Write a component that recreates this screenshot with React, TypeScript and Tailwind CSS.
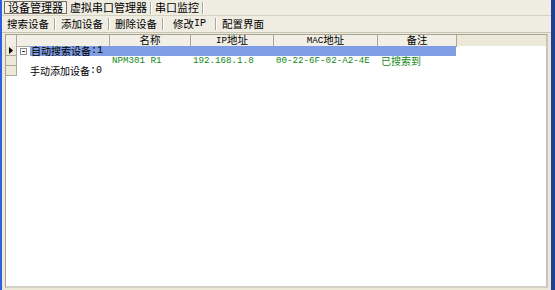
import React from "react";

const cn = "font-['Noto_Sans_CJK_SC','Liberation_Sans',sans-serif]";
const mono = "font-['Liberation_Mono','Noto_Sans_CJK_SC',monospace] text-[9.2px] leading-none";

const tabs = ["设备管理器", "虚拟串口管理器", "串口监控"];
const tools = ["搜索设备", "添加设备", "删除设备", "修改IP", "配置界面"];

// 列の幅（行ヘッダ / ツリー / 名称 / IP / MAC / 备注）
const cols = "grid-cols-[11px_93px_81px_83px_104px_79px]";

function Sep() {
  return <div className="w-[2px] h-[12px] border-l border-[#aca899] border-r border-r-white" />;
}

function Latin({ children }: { children: React.ReactNode }) {
  return <span className={mono}>{children}</span>;
}

export default function App() {
  return (
    <div className={`w-[555px] h-[290px] bg-[#ece9d8] flex text-[10.5px] text-black leading-none ${cn}`}>
      <div className="w-[2px] bg-[#2d5fe0]" />
      <div className="flex-1 flex flex-col">
        {/* タブ */}
        <div className="h-[16px] flex items-center pl-[2px] bg-[#efece1] border-b border-[#d6d2c2] text-[11px]">
          {tabs.map((t, i) => (
            <div key={t} className="flex items-center">
              <div
                className={
                  i === 0
                    ? "h-[13px] px-[3px] flex items-center border border-[#716f64] bg-[#f4f2ea]"
                    : "h-[13px] px-[3px] flex items-center"
                }
              >
                {t}
              </div>
              {i > 0 && <Sep />}
            </div>
          ))}
        </div>

        {/* ツールバー */}
        <div className="h-[17px] flex items-center bg-[#efece1] border-b border-[#c9c5b5]">
          {tools.map((t, i) => (
            <React.Fragment key={t}>
              <div className={t.endsWith("IP") ? "px-[9px] flex items-center" : "px-[5px] flex items-center"}>
                {t.endsWith("IP") ? (
                  <>
                    {t.slice(0, 2)}
                    <span className="font-['Liberation_Mono',monospace] text-[10px] leading-none">IP</span>
                  </>
                ) : (
                  t
                )}
              </div>
              {i < tools.length - 1 && <Sep />}
            </React.Fragment>
          ))}
        </div>

        {/* 一覧 */}
        <div className="flex-1 flex mt-[1px] pl-[3px] pb-[2px]">
          <div className="w-[543px] flex flex-col bg-white border border-[#a7a495] border-b-[2px] border-b-[#d4d0c8] border-r-[2px] border-r-[#c9c5b8]">
            <div className={`grid ${cols} h-[11px] bg-[#ece9d8]`}>
              {["", "", "名称", "IP地址", "MAC地址", "备注"].map((h, i) => (
                <div
                  key={i}
                  className="flex items-center justify-center border-r border-b border-[#aca899] bg-[#f1efe6]"
                >
                  {h === "IP地址" ? (
                    <>
                      <Latin>IP</Latin>地址
                    </>
                  ) : h === "MAC地址" ? (
                    <>
                      <Latin>MAC</Latin>地址
                    </>
                  ) : (
                    h
                  )}
                </div>
              ))}
            </div>

            {/* 行1：自動検索 */}
            <div className={`grid ${cols} h-[10px]`}>
              <div className="flex items-center justify-center border-r border-b border-[#aca899] bg-[#ece9d8]">
                <svg width="5" height="7" viewBox="0 0 5 7">
                  <path d="M0 0 L4 3.5 L0 7 Z" fill="#000" />
                </svg>
              </div>
              <div className="col-span-5 flex items-center">
                <div className="w-[13px] flex items-center justify-center">
                  <div className="w-[7px] h-[7px] border border-[#8c8c8c] flex items-center justify-center">
                    <div className="w-[3px] h-px bg-[#333]" />
                  </div>
                </div>
                <div className="h-full flex items-center w-[426px] bg-[#7f9de2] pl-[1px] text-[10px]">
                  自动搜索设备<span className="font-['Liberation_Mono',monospace] text-[10px] leading-none">:1</span>
                </div>
              </div>
            </div>

            {/* 行2：デバイス */}
            <div className={`grid ${cols} h-[10px] text-[#158a15]`}>
              <div className="border-r border-b border-[#aca899] bg-[#ece9d8]" />
              <div />
              <div className="flex items-center pl-[2px]">
                <Latin>NPM301 R1</Latin>
              </div>
              <div className="flex items-center pl-[2px]">
                <Latin>192.168.1.8</Latin>
              </div>
              <div className="flex items-center pl-[2px]">
                <Latin>00-22-6F-02-A2-4E</Latin>
              </div>
              <div className="flex items-center pl-[3px] text-[10px]">已搜索到</div>
            </div>

            {/* 行3：手動 */}
            <div className={`grid ${cols} h-[10px]`}>
              <div className="border-r border-b border-[#aca899] bg-[#ece9d8]" />
              <div className="col-span-5 flex items-center pl-[13px] text-[10px]">
                手动添加设备<span className="font-['Liberation_Mono',monospace] text-[10px] leading-none">:0</span>
              </div>
            </div>
          </div>
        </div>
      </div>
      <div className="w-[4px] bg-[#1f3f94]" />
    </div>
  );
}
